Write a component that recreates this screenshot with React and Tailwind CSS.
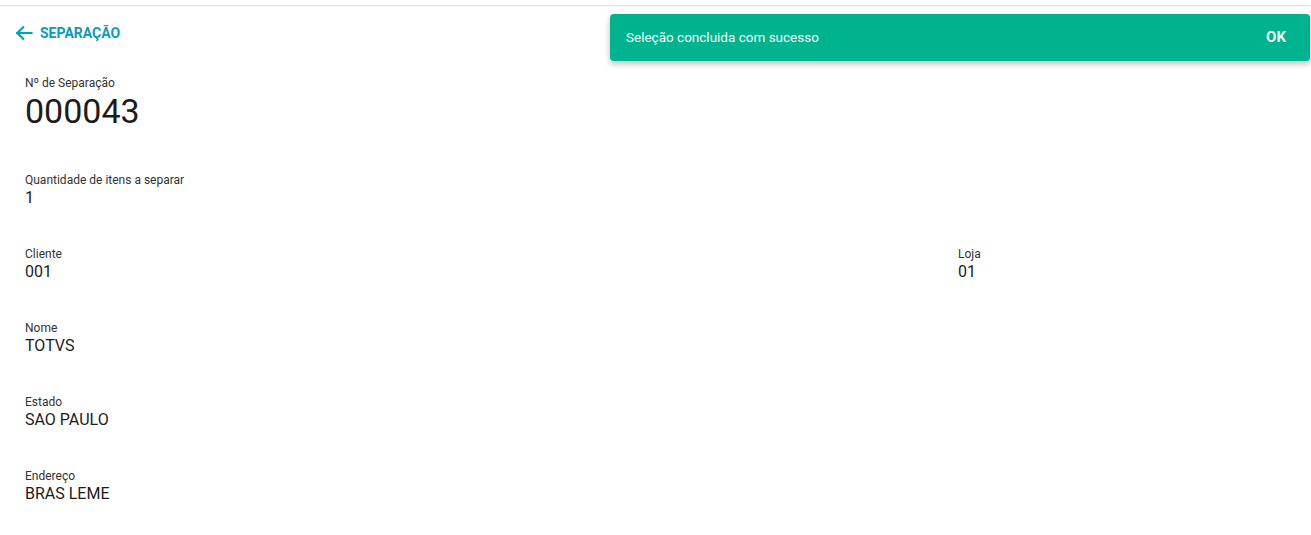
import React from "react";

function Field({ label, value, big }) {
  return (
    <div className={big ? "flex flex-col pb-[3px]" : "flex flex-col"}>
      <span className="text-[12px] leading-[16px] text-[#333333]">{label}</span>
      <span
        className={
          big
            ? "text-[34px] leading-[40px] text-[#1c1c1c]"
            : "text-[16px] leading-[20px] text-[#1c1c1c]"
        }
      >
        {value}
      </span>
    </div>
  );
}

export default function App() {
  return (
    <div className="relative min-h-[535px] bg-white font-['Roboto',sans-serif]">
      <div className="h-[6px] border-b border-[#e3e3e3] shadow-[0_1px_2px_rgba(0,0,0,0.04)]" />
      <div className="flex items-center gap-[6px] pl-[14px] h-[22px] mt-[16px]">
        <svg width="20" height="20" viewBox="0 0 24 24" fill="none" stroke="#0c9abe" strokeWidth="2.6" strokeLinecap="square">
          <path d="M21 12H4" />
          <path d="M11 5l-7 7 7 7" strokeLinejoin="miter" />
        </svg>
        <span className="text-[14px] font-bold text-[#0c9abe]">SEPARAÇÃO</span>
      </div>
      <div className="pl-[25px] pt-[31px] flex flex-col gap-[38px]">
        <Field label="Nº de Separação" value="000043" big />
        <Field label="Quantidade de itens a separar" value="1" />
        <div className="grid grid-cols-[933px_1fr]">
          <Field label="Cliente" value="001" />
          <Field label="Loja" value="01" />
        </div>
        <Field label="Nome" value="TOTVS" />
        <Field label="Estado" value="SAO PAULO" />
        <Field label="Endereço" value="BRAS LEME" />
      </div>
      <div className="absolute left-[610px] top-[14px] w-[700px] h-[47px] rounded-[4px] bg-[#00b38f] shadow-[0_3px_6px_rgba(0,0,0,0.25)] flex items-center justify-between pl-[16px] pr-[24px]">
        <span className="text-[13.5px] text-[#f2fbf8]">Seleção concluida com sucesso</span>
        <span className="text-[15px] font-bold text-[#e8f7f2]">OK</span>
      </div>
    </div>
  );
}
